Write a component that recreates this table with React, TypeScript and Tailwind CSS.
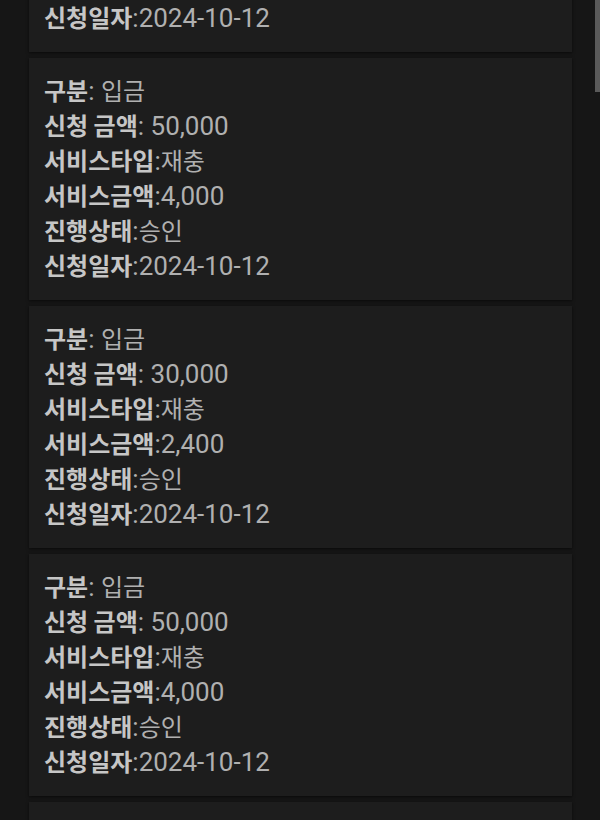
import React from 'react';

interface Request {
  kind: string;
  amount: string;
  serviceType: string;
  serviceAmount: string;
  status: string;
  date: string;
}

const requests: Request[] = [
  { kind: '입금', amount: '30,000', serviceType: '재충', serviceAmount: '2,400', status: '승인', date: '2024-10-12' },
  { kind: '입금', amount: '50,000', serviceType: '재충', serviceAmount: '4,000', status: '승인', date: '2024-10-12' },
  { kind: '입금', amount: '30,000', serviceType: '재충', serviceAmount: '2,400', status: '승인', date: '2024-10-12' },
  { kind: '입금', amount: '50,000', serviceType: '재충', serviceAmount: '4,000', status: '승인', date: '2024-10-12' },
  { kind: '입금', amount: '50,000', serviceType: '재충', serviceAmount: '4,000', status: '승인', date: '2024-10-12' },
];

const ko = 'text-[24px] [font-family:"Noto_Sans_CJK_KR",sans-serif]';

function Row({ label, value, spaced }: { label: string; value: string; spaced?: boolean }) {
  const isKorean = /[가-힣]/.test(value);
  return (
    <div className="h-[35px] flex items-baseline whitespace-pre">
      <span className={`${ko} leading-[32px] font-bold text-[#c6c6c6]`}>{label}</span>
      <span className="leading-[32px] text-[#b0b0b0]">:{spaced ? ' ' : ''}</span>
      <span className={`leading-[32px] text-[#b0b0b0] ${isKorean ? ko : ''}`}>{value}</span>
    </div>
  );
}

export default function App() {
  return (
    <div className="relative h-[820px] overflow-hidden bg-[#161616] [font-family:Roboto,'Noto_Sans_CJK_KR',sans-serif] text-[26px]">
      <div className="mt-[-190px] flex flex-col gap-[6px] ml-[29px] mr-[28px]">
        {requests.map((r, i) => (
          <div key={i} className="bg-[#1d1d1d] px-[15px] py-4 shadow-[0_1px_3px_rgba(0,0,0,0.6)]">
            <Row label="구분" value={r.kind} spaced />
            <Row label="신청 금액" value={r.amount} spaced />
            <Row label="서비스타입" value={r.serviceType} />
            <Row label="서비스금액" value={r.serviceAmount} />
            <Row label="진행상태" value={r.status} />
            <Row label="신청일자" value={r.date} />
          </div>
        ))}
      </div>
      {/* scrollbar */}
      <div className="absolute right-0 top-0 h-[92px] w-[5px] bg-[#5a5a5a]" />
    </div>
  );
}
